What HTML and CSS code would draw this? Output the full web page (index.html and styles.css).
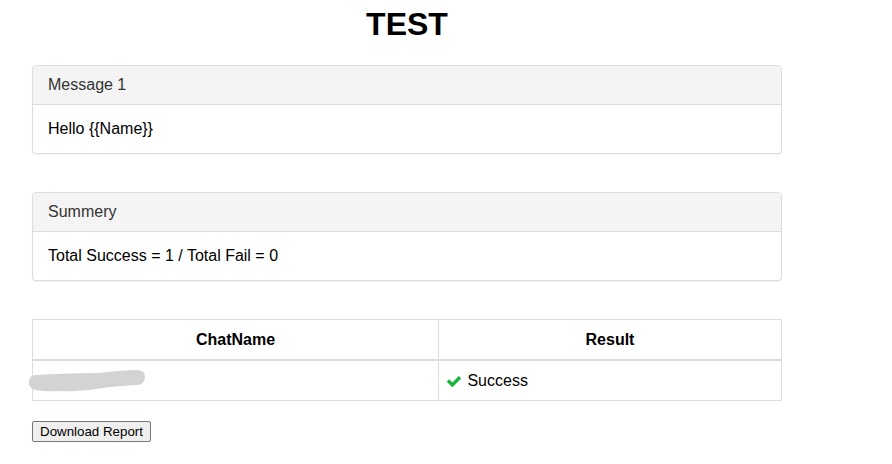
FILE: index.html
```html
<!DOCTYPE html>
<html lang="en">
<head>
    <meta charset="UTF-8">
    <title>TEST</title>
    <link rel="stylesheet" href="styles.css">
</head>
<body>
    <div class="container">
        <h1 class="title">TEST</h1>

        <div class="panel">
            <div class="panel-heading">Message 1</div>
            <div class="panel-body">Hello {{Name}}</div>
        </div>

        <div class="panel">
            <div class="panel-heading">Summery</div>
            <div class="panel-body">Total Success = 1 / Total Fail = 0</div>
        </div>

        <table class="result-table">
            <thead>
                <tr>
                    <th class="col-name">ChatName</th>
                    <th>Result</th>
                </tr>
            </thead>
            <tbody>
                <tr>
                    <td>
                        <svg class="redacted" width="118" height="22" viewBox="0 0 118 22">
                            <path d="M7 5 Q40 3 70 3 Q95 0 109 0 Q117 0 117 7 Q117 14 109 15 Q90 16 75 18 Q55 22 35 21 Q8 22 3 18 Q0 14 1 11 Q2 5 7 5 Z" fill="#d3d3d3"/>
                        </svg>
                    </td>
                    <td>
                        <svg class="check" width="14" height="11" viewBox="121 300 1550 1230">
                            <path d="M1671 566q0 40-28 68l-724 724-136 136q-28 28-68 28t-68-28l-136-136-362-362q-28-28-28-68t28-68l136-136q28-28 68-28t68 28l294 295 656-657q28-28 68-28t68 28l136 136q28 28 28 68z" fill="#1cb23e"/>
                        </svg>
                        Success
                    </td>
                </tr>
            </tbody>
        </table>

        <button class="download-button">Download Report</button>
    </div>
</body>
</html>
```

FILE: styles.css
```css
body {
    margin: 0;
    font-family: "Liberation Sans", Arial, sans-serif;
    font-size: 16px;
    color: #000;
    background: #fff;
}

.container {
    width: 750px;
    margin-left: 32px;
}

.title {
    font-size: 32px;
    font-weight: bold;
    text-align: center;
    margin: 6px 0 22px;
}

.panel {
    border: 1px solid #ddd;
    border-radius: 4px;
    box-shadow: 0 1px 1px rgba(0, 0, 0, 0.05);
    margin-bottom: 38px;
    background-color: #fff;
}

.panel-heading {
    background-color: #f4f4f4;
    color: #333;
    padding: 10px 15px;
    border-bottom: 1px solid #ddd;
    border-radius: 3px 3px 0 0;
}

.panel-body {
    padding: 15px;
}

.result-table {
    width: 100%;
    border-collapse: collapse;
    margin-bottom: 20px;
}

.result-table th,
.result-table td {
    border: 1px solid #ddd;
    padding: 8px;
    line-height: 23px;
}

.result-table th {
    font-weight: bold;
    text-align: center;
    border-bottom-width: 2px;
}

.result-table td {
    text-align: left;
}

.col-name {
    width: 389px;
}

.redacted {
    display: block;
    margin-left: -13px;
}

.check {
    vertical-align: -1px;
    margin-right: 2px;
}

.download-button {
    font-family: "Liberation Sans", Arial, sans-serif;
    font-size: 13.333px;
    color: #000;
    background-color: #efefef;
    border: 1px solid #767676;
    border-radius: 2px;
    padding: 2px 7px;
}
```
